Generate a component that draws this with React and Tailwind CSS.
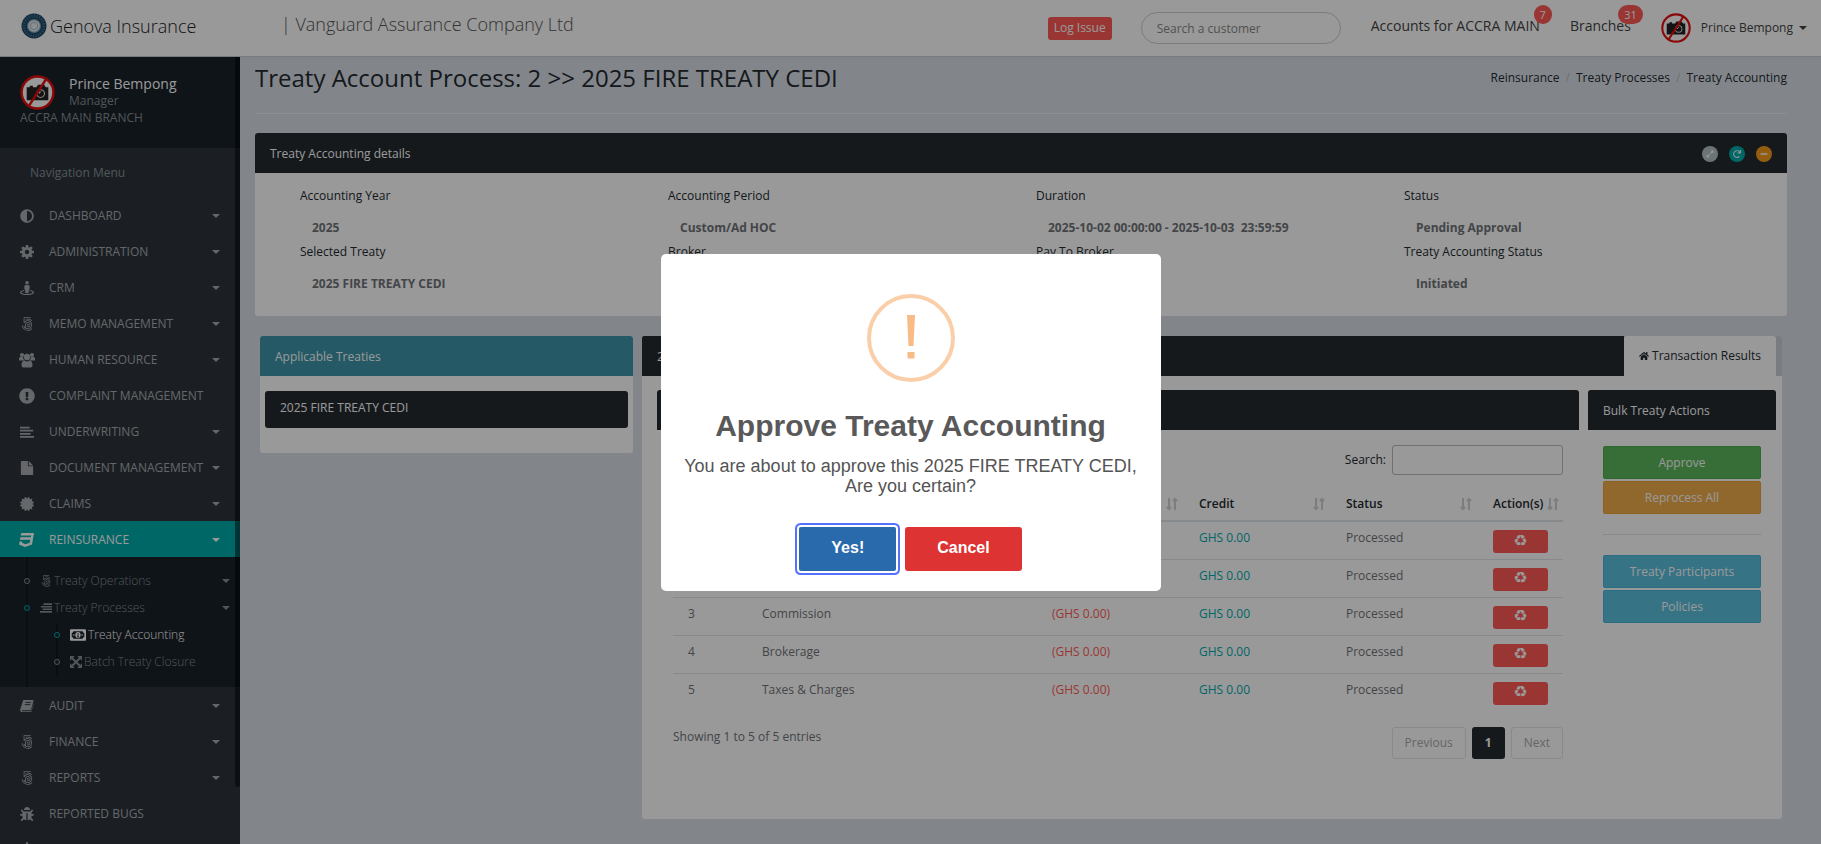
import { useState } from "react";
import {
  FaAdjust,
  FaBell,
  FaBug,
  FaCertificate,
  FaCss3,
  FaExclamationCircle,
  FaExpandAlt,
  FaHome,
  FaMinus,
  FaRedo,
  FaStreetView,
} from "react-icons/fa";
import { Fa500Px } from "react-icons/fa6";

function CogIcon({ className }) {
  return (
    <svg viewBox="0 0 14 14" className={className} stroke="currentColor" fill="none">
      <circle cx="7" cy="7" r="3.700" strokeWidth="3" />
      <path
        d="M7 0v2.500M7 11.500v2.500M0 7h2.500M11.500 7h2.500M2.100 2.100l1.700 1.700M10.200 10.200l1.700 1.700M2.100 11.900l1.700-1.700M10.200 3.800l1.700-1.700"
        strokeWidth="2.600"
      />
    </svg>
  );
}

function UsersIcon({ className }) {
  return (
    <svg viewBox="0 0 16 16" className={className} fill="currentColor">
      <circle cx="3" cy="3" r="2.100" />
      <circle cx="13" cy="3" r="2.100" />
      <circle cx="8" cy="5" r="3.200" />
      <path d="M0 8.500V6.500C0 5.500.8 5 1.800 5h2.200c.1 1.500.7 2.800 1.600 3.500zM16 8.500V6.500c0-1-.8-1.500-1.800-1.500H12c-.1 1.500-.7 2.800-1.600 3.500z" />
      <path d="M2.500 13.500c0-3 1-5 3-5 .8.6 1.600.9 2.500.9s1.700-.3 2.500-.9c2 0 3 2 3 5 0 1.300-.9 2-2 2h-7c-1.100 0-2-.7-2-2z" />
    </svg>
  );
}

function LinesLeftIcon({ className }) {
  return (
    <svg viewBox="0 0 16 14" className={className} stroke="currentColor" strokeWidth="2">
      <path d="M0 2h11M0 5.500h15M0 9h12M0 12.500h16" />
    </svg>
  );
}

function LinesRightIcon({ className }) {
  return (
    <svg viewBox="0 0 14 12" className={className} stroke="currentColor" strokeWidth="1.800">
      <path d="M4 1.500h10M1 4.500h13M3 7.500h11M0 10.500h14" />
    </svg>
  );
}

function FileIcon({ className }) {
  return (
    <svg viewBox="0 0 14 16" className={className} fill="currentColor">
      <path d="M0 1c0-.6.4-1 1-1h7v5c0 .6.400 1 1 1h5v9c0 .6-.4 1-1 1H1c-.6 0-1-.4-1-1z" />
      <path d="M9 0l5 5H9z" />
    </svg>
  );
}

function BookIcon({ className }) {
  return (
    <svg viewBox="0 0 15 14" className={className}>
      <path d="M4.500.5h9c.8 0 1.100.5.900 1.200l-2.400 8.600c-.2.700-.7 1.200-1.500 1.200H2.500c-.6 0-.9 1 0 1H11c.6 0 1-.3 1.200-.9L14.500 4v1.200l-2 7.200c-.2.700-.8 1.100-1.500 1.100H2C.6 13.500-.2 12 .3 10.500L3 2C3.200 1 3.700.5 4.500.5z" fill="currentColor" />
      <path d="M5.800 3.200h6M5.100 5.500h6" stroke="#2d353c" />
    </svg>
  );
}

function MoneyIcon({ className }) {
  return (
    <svg viewBox="0 0 17 12" className={className}>
      <rect width="17" height="12" rx="1" fill="currentColor" />
      <path d="M3.500 2h10c0 1 .7 1.800 1.700 1.800v4.400c-1 0-1.700.8-1.700 1.800h-10c0-1-.7-1.800-1.700-1.800V3.800C2.800 3.800 3.500 3 3.500 2z" fill="#1a2229" />
      <ellipse cx="8.500" cy="6" rx="2.800" ry="3.200" fill="currentColor" />
      <path d="M8.500 4v4M7.500 8h2" stroke="#1a2229" />
      <path d="M3 6h2M12 6h2" stroke="currentColor" />
    </svg>
  );
}

function ArrowsIcon({ className }) {
  return (
    <svg viewBox="0 0 12 12" className={className} fill="currentColor">
      <path d="M0 0h4.800L0 4.800zM12 0v4.800L7.200 0zM0 12V7.200L4.800 12zM12 12H7.200L12 7.200z" />
      <path d="M2 2l8 8M10 2l-8 8" stroke="currentColor" strokeWidth="2" />
    </svg>
  );
}

const navTop = [
  { label: "DASHBOARD", icon: FaAdjust, caret: true },
  { label: "ADMINISTRATION", icon: CogIcon, caret: true },
  { label: "CRM", icon: FaStreetView, caret: true },
  { label: "MEMO MANAGEMENT", icon: Fa500Px, caret: true },
  { label: "HUMAN RESOURCE", icon: UsersIcon, caret: true, wide: true },
  { label: "COMPLAINT MANAGEMENT", icon: FaExclamationCircle, wide: true },
  { label: "UNDERWRITING", icon: LinesLeftIcon, caret: true },
  { label: "DOCUMENT MANAGEMENT", icon: FileIcon, caret: true },
  { label: "CLAIMS", icon: FaCertificate, caret: true },
  { label: "REINSURANCE", icon: FaCss3, caret: true, active: true, wide: true },
];

const navBottom = [
  { label: "AUDIT", icon: BookIcon, caret: true },
  { label: "FINANCE", icon: Fa500Px, caret: true },
  { label: "REPORTS", icon: Fa500Px, caret: true },
  { label: "REPORTED BUGS", icon: FaBug },
  { label: "", icon: FaBell, wide: true },
];

const details = [
  { label: "Accounting Year", value: "2025" },
  { label: "Accounting Period", value: "Custom/Ad HOC" },
  { label: "Duration", value: "2025-10-02 00:00:00 - 2025-10-03  23:59:59" },
  { label: "Status", value: "Pending Approval" },
  { label: "Selected Treaty", value: "2025 FIRE TREATY CEDI" },
  { label: "Broker", value: "" },
  { label: "Pay To Broker", value: "" },
  { label: "Treaty Accounting Status", value: "Initiated" },
];

const rows = ["Premium", "Claims", "Commission", "Brokerage", "Taxes & Charges"];

function Caret({ className = "" }) {
  return (
    <span
      className={`inline-block border-x-4 border-t-4 border-x-transparent border-t-current ${className}`}
    />
  );
}

function Avatar({ className }) {
  return (
    <svg viewBox="0 0 34 34" className={className}>
      <circle cx="17" cy="17" r="15.500" fill="#fff" stroke="#e80c0c" strokeWidth="2.400" />
      <path d="M6.500 12h3v-1.500h3V12h3.500l1.500-2.500h6L25 12h2.500v12.500h-21z" fill="#222" />
      <circle cx="20" cy="18" r="4.200" fill="#fff" />
      <circle cx="20" cy="18" r="3.300" fill="#222" />
      <path d="M18.500 18c0-1 .7-1.600 1.600-1.600" stroke="#fff" fill="none" />
      <path d="M25 4.500L9 29.500" stroke="#e80c0c" strokeWidth="2.400" />
    </svg>
  );
}

function Logo() {
  return (
    <svg viewBox="0 0 26 26" className="size-[26px]">
      <circle cx="13" cy="13" r="12.500" fill="#1f4a66" />
      <circle cx="13" cy="13" r="10" fill="none" stroke="#4a7894" strokeWidth="3" strokeDasharray="1 1.600" />
      <circle cx="13" cy="13" r="7" fill="#7fa3b8" />
      <circle cx="13" cy="13" r="5.800" fill="#e8eef2" />
      <circle cx="13" cy="13" r="3.700" fill="none" stroke="#a9b8c2" strokeWidth="1" />
    </svg>
  );
}

function SortIcon() {
  return (
    <svg viewBox="0 0 12 14" className="h-3.5 w-3 shrink-0" fill="none" stroke="#d0d0d0" strokeWidth="2">
      <path d="M3 1v11M1 10l2 2 2-2M9 13V2M7 4l2-2 2 2" />
    </svg>
  );
}

function NavItem({ item }) {
  const Icon = item.icon;
  return (
    <li>
      <a
        href="#"
        className={`flex h-9 items-center pt-px pr-5 pl-[19px] ${
          item.active ? "bg-[#00acac] text-white" : "text-[#a8acb1]"
        }`}
      >
        <span className="mr-3.5 flex w-4 justify-center">
          <Icon className={item.wide ? "size-4" : "size-3.5"} />
        </span>
        <span className="flex-1 whitespace-nowrap">{item.label}</span>
        {item.caret && <Caret />}
      </a>
    </li>
  );
}

function SubItem({ icon: Icon, label, caret, dot, active, iconSize = "size-3", className }) {
  return (
    <li className={`flex h-[27px] items-center ${className}`}>
      <span className={`z-10 size-1.5 shrink-0 rounded-full border bg-[#1a2229] ${dot}`} />
      <a
        href="#"
        className={`ml-2.5 flex flex-1 items-center gap-0.5 whitespace-nowrap ${
          active ? "text-white" : "text-[#889097]"
        }`}
      >
        <Icon className={iconSize} />
        <span className="flex-1 font-light">{label}</span>
        {caret && <Caret />}
      </a>
    </li>
  );
}

function Sidebar() {
  return (
    <aside className="relative w-60 shrink-0 bg-[#2d353c]">
      <div className="h-[91px] bg-[#1a2229] px-5 pt-[18px] leading-4 text-[#889097]">
        <div className="flex">
          <Avatar className="size-[35px]" />
          <div className="ml-3.5">
            <p className="text-sm leading-[18px] text-white">Prince Bempong</p>
            <p>Manager</p>
          </div>
        </div>
        <p>ACCRA MAIN BRANCH</p>
      </div>
      <nav>
        <p className="px-[30px] pt-[15px] pb-3.5 leading-5 text-[#889097]">Navigation Menu</p>
        <ul>
          {navTop.map((item) => (
            <NavItem key={item.label} item={item} />
          ))}
        </ul>
        <div className="relative bg-[#1a2229] pt-2.5 pb-3">
          <span className="absolute inset-y-0 left-[26px] w-0.5 bg-[#12181d]" />
          <span className="absolute top-[66px] bottom-[11px] left-14 w-0.5 bg-[#12181d]" />
          <ul className="pr-2.5">
            <SubItem icon={Fa500Px} label="Treaty Operations" caret dot="border-[#889097]" className="pl-6" />
            <SubItem icon={LinesRightIcon} label="Treaty Processes" caret dot="border-[#00acac]" className="pl-6" />
            <SubItem
              icon={MoneyIcon}
              iconSize="h-3 w-4"
              label="Treaty Accounting"
              active
              dot="border-[#00acac]"
              className="pl-[54px]"
            />
            <SubItem icon={ArrowsIcon} label="Batch Treaty Closure" dot="border-[#889097]" className="pl-[54px]" />
          </ul>
        </div>
        <ul>
          {navBottom.map((item) => (
            <NavItem key={item.label} item={item} />
          ))}
        </ul>
      </nav>
      <div className="absolute top-0 right-0 h-[730px] w-[5px] rounded-b-full bg-black/50" />
    </aside>
  );
}

function Header() {
  return (
    <header className="flex h-[57px] items-center border-b border-[#c8cdd2] bg-white pr-3.5 pl-[21px]">
      <a href="#" className="mb-1 flex w-[260px] items-center gap-[3px] text-lg font-light text-[#222]">
        <Logo />
        Genova Insurance
      </a>
      <p className="mb-2 flex-1 text-lg font-light text-[#555]">| Vanguard Assurance Company Ltd</p>
      <button className="h-[23px] rounded-[3px] bg-[#ff5b57] px-1.5 text-white">Log Issue</button>
      <input
        aria-label="Search a customer"
        placeholder="Search a customer"
        className="ml-[29px] h-8 w-[200px] rounded-full border border-[#ccd0d4] px-[15px] text-[#555] placeholder:text-[#888]"
      />
      <a href="#" className="relative mb-1 ml-[30px] text-sm text-[#444]">
        Accounts for ACCRA MAIN
        <span className="absolute -top-[11px] -right-3 rounded-full bg-[#ff5b57] px-1.5 text-[11px] leading-[19px] text-white">7</span>
      </a>
      <a href="#" className="relative mb-1 ml-[30px] text-sm text-[#444]">
        Branches
        <span className="absolute -top-[11px] -right-3 rounded-full bg-[#ff5b57] px-1.5 text-[11px] leading-[19px] text-white">31</span>
      </a>
      <button className="ml-[30px] flex items-center text-[#444]">
        <Avatar className="mr-2.5 size-[30px]" />
        Prince Bempong
        <Caret className="ml-1.5" />
      </button>
    </header>
  );
}

function PanelHeading({ children, className = "bg-[#242a30]" }) {
  return (
    <div className={`flex h-10 items-center rounded-t-[3px] px-[15px] pt-px text-white ${className}`}>{children}</div>
  );
}

function DetailsPanel() {
  return (
    <section className="rounded-[3px] bg-white">
      <PanelHeading>
        <h4 className="flex-1">Treaty Accounting details</h4>
        <div className="flex gap-[11px] text-[8px]">
          <button aria-label="Expand" className="flex size-4 items-center justify-center rounded-full bg-[#b6c2c9]">
            <FaExpandAlt />
          </button>
          <button aria-label="Reload" className="flex size-4 items-center justify-center rounded-full bg-[#00acac]">
            <FaRedo />
          </button>
          <button aria-label="Collapse" className="flex size-4 items-center justify-center rounded-full bg-[#f59c1a]">
            <FaMinus />
          </button>
        </div>
      </PanelHeading>
      <dl className="grid grid-cols-4 px-[30px] pt-[11px] pb-5">
        {details.map((item) => (
          <div key={item.label} className="h-14 px-[15px] leading-6">
            <dt className="text-[#242a30]">{item.label}</dt>
            <dd className="mt-2 pl-3 font-bold whitespace-pre text-[#707478]">{item.value}</dd>
          </div>
        ))}
      </dl>
    </section>
  );
}

function ResultsTable() {
  return (
    <div className="px-4 pt-[15px] text-[#707478]">
      <div className="flex items-center justify-end">
        <label htmlFor="table-search" className="mr-1.5 text-[#242a30]">
          Search:
        </label>
        <input id="table-search" className="h-[30px] w-[171px] rounded-[3px] border border-[#b8bcc0] px-2" />
      </div>
      <table className="mt-3 w-full table-fixed text-left">
        <thead>
          <tr className="h-[34px] border-b-2 border-[#e2e7eb] text-[#242a30]">
            <th className="w-[74px] pl-[15px] font-semibold">#</th>
            <th className="pl-[15px] font-semibold">Transaction</th>
            {["Debit", "Credit", "Status"].map((name) => (
              <th key={name} className="w-[147px] pr-1.5 pl-[15px] font-semibold">
                <span className="flex items-center justify-between">
                  {name}
                  <SortIcon />
                </span>
              </th>
            ))}
            <th className="w-[85px] pr-1 pl-[15px] font-semibold">
              <span className="flex items-center justify-between">
                Action(s)
                <SortIcon />
              </span>
            </th>
          </tr>
        </thead>
        <tbody>
          {rows.map((name, index) => (
            <tr key={name} className="h-[38px] border-t border-[#e2e7eb] align-top leading-[18px]">
              <td className="pt-[7px] pl-[15px]">{index + 1}</td>
              <td className="pt-[7px] pl-[15px]">{name}</td>
              <td className="pt-[7px] pl-[15px] text-[#ff5b57]">(GHS 0.00)</td>
              <td className="pt-[7px] pl-[15px] text-[#00acac]">GHS 0.00</td>
              <td className="pt-[7px] pl-[15px]">Processed</td>
              <td className="pt-2 pl-[15px]">
                <button
                  aria-label="Reprocess"
                  className="flex h-[23px] w-[55px] items-center justify-center rounded-[3px] bg-[#ff5b57] pb-0.5 font-['DejaVu_Sans',sans-serif] text-base leading-none text-white"
                >
                  ♻
                </button>
              </td>
            </tr>
          ))}
        </tbody>
      </table>
      <div className="mt-4 flex items-start justify-between">
        <p className="leading-5">Showing 1 to 5 of 5 entries</p>
        <div className="flex gap-1.5">
          <button className="h-8 rounded-[3px] border border-[#e2e7eb] px-3 text-[#aaa]">Previous</button>
          <button className="h-8 rounded-[3px] bg-[#242a30] px-[13px] font-bold text-white">1</button>
          <button className="h-8 rounded-[3px] border border-[#e2e7eb] px-3 text-[#aaa]">Next</button>
        </div>
      </div>
    </div>
  );
}

function BulkActions() {
  return (
    <section className="w-[188px]">
      <PanelHeading>Bulk Treaty Actions</PanelHeading>
      <div className="px-[15px] pt-4 text-white">
        <button className="mb-0.5 h-[33px] w-full rounded-[2px] border border-[#4cae4c] bg-[#5cb85c]">Approve</button>
        <button className="h-[33px] w-full rounded-[2px] border border-[#eea236] bg-[#f0ad4e]">Reprocess All</button>
        <hr className="my-5 border-[#e2e7eb]" />
        <button className="mb-0.5 h-[33px] w-full rounded-[2px] border border-[#46b8da] bg-[#5bc0de]">
          Treaty Participants
        </button>
        <button className="h-[33px] w-full rounded-[2px] border border-[#46b8da] bg-[#5bc0de]">Policies</button>
      </div>
    </section>
  );
}

function ApproveDialog({ onClose }) {
  return (
    <div className="fixed inset-0 z-20 flex items-center justify-center bg-black/40">
      <div
        role="dialog"
        aria-modal="true"
        aria-labelledby="approve-title"
        className="flex w-[500px] flex-col items-center rounded-[5px] bg-white px-5 pt-10 pb-5 font-['Liberation_Sans',sans-serif]"
      >
        <svg viewBox="0 0 88 88" className="size-[88px]">
          <circle cx="44" cy="44" r="42" fill="none" stroke="#facea8" strokeWidth="4" />
          <path d="M40 21h8l-1.500 31h-5zM40.500 58h7v6.500h-7z" fill="#f8bb86" />
        </svg>
        <h2 id="approve-title" className="mt-6 text-[30px] leading-10 font-bold text-[#595959]">
          Approve Treaty Accounting
        </h2>
        <p className="mt-2.5 text-center text-lg leading-5 text-[#545454]">
          You are about to approve this 2025 FIRE TREATY CEDI, Are you certain?
        </p>
        <div className="mt-[31px] flex gap-[9px] text-base font-bold text-white">
          <button
            className="h-11 rounded-[2px] bg-[#286aab] px-8 pb-0.5 ring-2 ring-[#5472ff] ring-offset-2"
            onClick={onClose}
          >
            Yes!
          </button>
          <button className="h-11 rounded-[3px] bg-[#dd3333] px-8 pb-0.5" onClick={onClose}>
            Cancel
          </button>
        </div>
      </div>
    </div>
  );
}

export default function App() {
  const [open, setOpen] = useState(true);

  return (
    <div className="flex h-screen flex-col overflow-hidden bg-[#d9e0e7] font-['Open_Sans',sans-serif] text-xs">
      <Header />
      <div className="flex min-h-0 flex-1">
        <Sidebar />
        <main className="min-w-0 flex-1 pr-[34px] pl-[15px]">
          <div className="flex h-[57px] items-start justify-between border-b border-[#eee] pt-[5px] text-[#242a30]">
            <h1 className="text-2xl">Treaty Account Process: 2 &gt;&gt; 2025 FIRE TREATY CEDI</h1>
            <nav className="flex gap-1.5 leading-8">
              <a href="#">Reinsurance</a>
              <span className="text-[#b4bac0]">/</span>
              <a href="#">Treaty Processes</a>
              <span className="text-[#b4bac0]">/</span>
              <a href="#">Treaty Accounting</a>
            </nav>
          </div>

          <div className="mt-[19px]">
            <DetailsPanel />
          </div>

          <div className="mt-5 flex items-start gap-[9px] px-[5px]">
            <section className="w-[373px] rounded-[3px] bg-white pb-[25px]">
              <PanelHeading className="bg-[#3c95a8]">Applicable Treaties</PanelHeading>
              <div className="mx-[5px] mt-[15px] flex h-[37px] rounded-[3px] bg-[#242a30] px-[15px] pt-px leading-8 text-white">
                2025 FIRE TREATY CEDI
              </div>
            </section>

            <section className="min-w-0 flex-1 rounded-[3px] bg-white">
              <div className="flex rounded-t-[3px] bg-[#c8d0d8] pr-[6px]">
                <div className="flex-1 rounded-tl-[3px] bg-[#242a30]">
                  <PanelHeading>2025 FIRE TREATY CEDI</PanelHeading>
                </div>
                <a href="#" className="flex items-center gap-[3px] rounded-t-[3px] bg-white px-[15px] text-[#242a30]">
                  <FaHome className="size-2.5" />
                  Transaction Results
                </a>
              </div>
              <div className="flex gap-[9px] pt-3.5 pr-[6px] pb-[60px] pl-[15px]">
                <section className="min-w-0 flex-1">
                  <PanelHeading>Transactions</PanelHeading>
                  <ResultsTable />
                </section>
                <BulkActions />
              </div>
            </section>
          </div>
        </main>
      </div>
      {open && <ApproveDialog onClose={() => setOpen(false)} />}
    </div>
  );
}
